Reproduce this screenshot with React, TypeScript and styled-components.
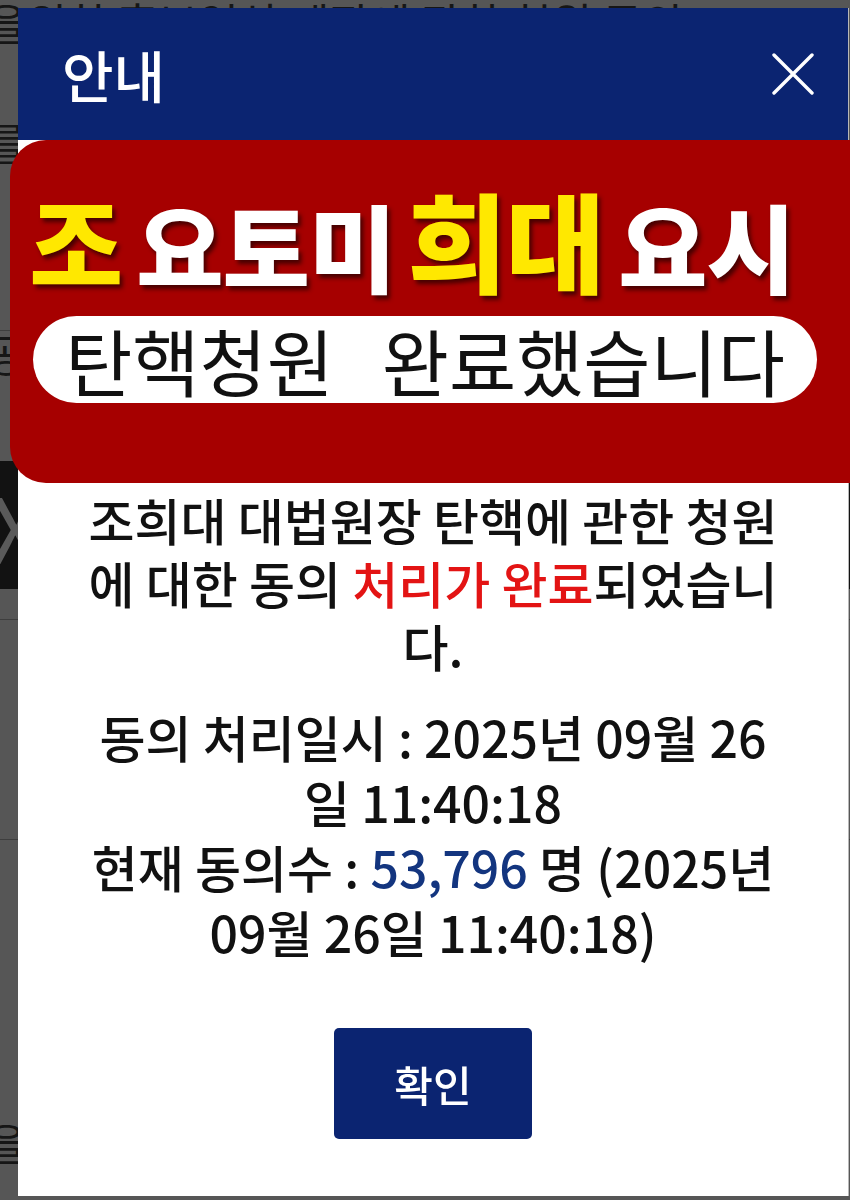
import React from "react";
import styled, { createGlobalStyle } from "styled-components";

const NAVY = "#0b2471";
const RED = "#a60000";
const YELLOW = "#ffe800";
const KR = `"Noto Sans CJK KR", "Noto Sans", sans-serif`;

const GlobalStyle = createGlobalStyle`
  html, body {
    margin: 0;
    padding: 0;
    background: #565656;
    font-family: ${KR};
    overflow: hidden;
  }
`;

/* page that sits behind the dimmed backdrop */
const Page = styled.div`
  display: flex;
  flex-direction: column;
  height: 1200px;
  margin-left: -14px;
  color: #161616;
`;

const PageText = styled.div<{ $h: number }>`
  height: ${(p) => p.$h}px;
  font-size: 44px;
  line-height: 1;
  white-space: nowrap;
  overflow: hidden;
  margin-top: -14px;
  padding-top: 14px;
`;

const PageRule = styled.div`
  height: 1px;
  background: #3e3e3e;
`;

const PageDark = styled.div`
  height: 128px;
  background: #121212;
  color: #5a5a5a;
  font-size: 90px;
  line-height: 128px;
  padding-left: 4px;
`;

const Gap = styled.div<{ $h: number }>`
  height: ${(p) => p.$h}px;
`;

/* modal */
const Overlay = styled.div`
  position: fixed;
  inset: 0;
  display: flex;
  padding: 8px 1px 4px 18px;
`;

const Modal = styled.div`
  flex: 1;
  display: flex;
  flex-direction: column;
  background: #fff;
  border-right: 1px solid #b8b8b8;
`;

const Header = styled.div`
  flex: none;
  height: 132px;
  background: ${NAVY};
  display: flex;
  align-items: center;
  justify-content: space-between;
  padding: 0 34px 0 44px;
`;

const Title = styled.h1`
  margin: 0;
  color: #fff;
  font-size: 56px;
  font-weight: 500;
  line-height: 1;
`;

const CloseButton = styled.button`
  border: 0;
  background: none;
  padding: 0;
  width: 42px;
  height: 42px;
  display: flex;
  align-items: center;
  justify-content: center;
  cursor: pointer;
`;

const Banner = styled.div`
  flex: none;
  margin: 0 -2px 0 -8px;
  height: 343px;
  background: ${RED};
  border-radius: 36px 0 0 36px;
  display: flex;
  flex-direction: column;
  align-items: center;
  padding-top: 30px;
  box-sizing: border-box;
`;

const Headline = styled.div`
  display: flex;
  align-items: flex-end;
  margin-left: -36px;
  height: 122px;
`;

const Big = styled.span<{ $yellow?: boolean; $size: number; $gap?: number }>`
  color: ${(p) => (p.$yellow ? YELLOW : "#fff")};
  font-size: ${(p) => p.$size}px;
  font-weight: 900;
  line-height: 1;
  letter-spacing: -1px;
  margin-left: ${(p) => p.$gap ?? 0}px;
  text-shadow: 3px 4px 4px rgba(40, 0, 0, 0.75);
`;

const Pill = styled.div`
  margin-top: 24px;
  width: 784px;
  height: 87px;
  margin-left: -10px;
  background: #fff;
  border-radius: 44px;
  display: flex;
  align-items: center;
  justify-content: center;
  color: #111;
  font-size: 73px;
  font-weight: 400;
  line-height: 1;
  white-space: nowrap;
`;

const PillGap = styled.span`
  display: inline-block;
  width: 48px;
`;

const Body = styled.div`
  padding: 5px 60px 0;
  text-align: center;
  color: #111;
  font-size: 50px;
  font-weight: 500;
  display: flex;
  flex-direction: column;
  align-items: stretch;
`;

const Para = styled.p<{ $gap?: number; $lh: number }>`
  margin: ${(p) => p.$gap ?? 0}px 0 0;
  line-height: ${(p) => p.$lh}px;
  overflow-wrap: anywhere;
`;

const Mark = styled.span<{ $color: string }>`
  color: ${(p) => p.$color};
`;

const Confirm = styled.button`
  margin: 64px auto 0;
  width: 198px;
  height: 111px;
  border: 0;
  border-radius: 5px;
  background: ${NAVY};
  color: #fff;
  font-family: ${KR};
  font-size: 42px;
  font-weight: 500;
  cursor: pointer;
`;

export default function App() {
  return (
    <>
      <GlobalStyle />
      <Page>
        <PageText $h={120}>을위한 홍보영상 제작에 관한 청원 동의</PageText>
        <PageText $h={210}>를 위 시</PageText>
        <PageRule />
        <PageText $h={130}>공</PageText>
        <PageDark>X</PageDark>
        <Gap $h={30} />
        <PageRule />
        <Gap $h={220} />
        <PageRule />
        <Gap $h={280} />
        <PageText $h={80}>을</PageText>
      </Page>

      <Overlay>
        <Modal role="dialog" aria-label="안내">
          <Header>
            <Title>안내</Title>
            <CloseButton aria-label="닫기">
              <svg width="42" height="42" viewBox="0 0 42 42">
                <path
                  d="M2 2 L40 40 M40 2 L2 40"
                  stroke="#fff"
                  strokeWidth="3.4"
                  strokeLinecap="round"
                />
              </svg>
            </CloseButton>
          </Header>

          <Banner>
            <Headline>
              <Big $yellow $size={102}>조</Big>
              <Big $size={95} $gap={14}>요토미</Big>
              <Big $yellow $size={108} $gap={12}>희대</Big>
              <Big $size={97} $gap={14}>요시</Big>
            </Headline>
            <Pill>
              탄핵청원<PillGap />완료했습니다
            </Pill>
          </Banner>

          <Body>
            <Para $lh={63}>
              조희대 대법원장 탄핵에 관한 청원에 대한 동의{" "}
              <Mark $color="#e31414">처리가 완료</Mark>되었습니다.
            </Para>
            <Para $gap={27} $lh={65}>
              동의 처리일시 : 2025년 09월 26일 11:40:18
              <br />
              현재 동의수 : <Mark $color="#13357f">53,796</Mark> 명 (2025년 09월 26일 11:40:18)
            </Para>
            <Confirm>확인</Confirm>
          </Body>
        </Modal>
      </Overlay>
    </>
  );
}
